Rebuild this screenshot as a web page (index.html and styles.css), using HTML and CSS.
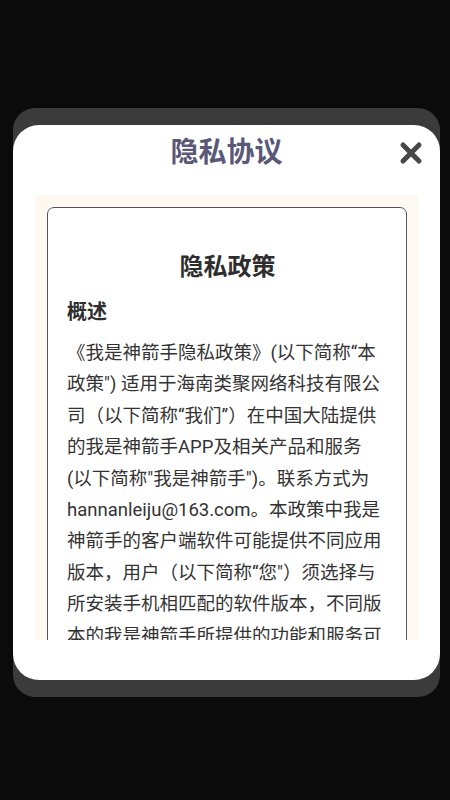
FILE: index.html
```html
<!DOCTYPE html>
<html lang="zh-CN">
<head>
<meta charset="utf-8">
<link rel="stylesheet" href="styles.css">
</head>
<body>
<div class="screen">
  <div class="panel">
    <div class="card">
      <div class="header">
        <div class="title">隐私协议</div>
        <svg class="close" viewBox="0 0 24 24" width="24" height="24"><path d="M4 4 L20 20 M20 4 L4 20" stroke="#474747" stroke-width="5" stroke-linecap="round" fill="none"/></svg>
      </div>
      <div class="scroll">
        <div class="doc">
          <div class="doc-title">隐私政策</div>
          <div class="section">概述</div>
          <p class="para">《我是神箭手隐私政策》(以下简称“本<br>政策") 适用于海南类聚网络科技有限公<br>司（以下简称“我们”）在中国大陆提供<br>的我是神箭手APP及相关产品和服务<br>(以下简称"我是神箭手")。联系方式为<br>hannanleiju@163.com。本政策中我是<br>神箭手的客户端软件可能提供不同应用<br>版本，用户（以下简称“您"）须选择与<br>所安装手机相匹配的软件版本，不同版<br>本的我是神箭手所提供的功能和服务可<br>能存在差异。</p>
        </div>
      </div>
    </div>
  </div>
</div>
</body>
</html>
```
FILE: styles.css
```css
html, body {
  margin: 0;
  padding: 0;
  background: #0b0b0b;
}
body {
  width: 450px;
  height: 800px;
  overflow: hidden;
  font-family: Roboto, "Noto Sans CJK SC", sans-serif;
}
.screen {
  padding: 108px 10px 0 13px;
}
.panel {
  background: #3b3b3b;
  border-radius: 22px;
  padding: 17px 0;
}
.card {
  background: #ffffff;
  border-radius: 26px;
  height: 555px;
  overflow: hidden;
}
.header {
  position: relative;
  height: 70px;
  display: flex;
  justify-content: center;
}
.title {
  margin-top: 10px;
  font-size: 28px;
  line-height: 36px;
  height: 36px;
  font-weight: 700;
  color: #5a5878;
}
.close {
  position: absolute;
  right: 17px;
  top: 16px;
}
.scroll {
  margin: 0 22px;
  height: 445px;
  background: #fdf8f0;
  padding: 12px 11px 0 12px;
  box-sizing: border-box;
  overflow: hidden;
}
.doc {
  background: #ffffff;
  border: 1.5px solid #555555;
  border-radius: 7px;
  padding: 42px 12px 0 19px;
  color: #333333;
}
.doc-title {
  text-align: center;
  font-size: 24px;
  line-height: 34px;
  font-weight: 700;
  color: #2e2e2e;
  padding-right: 6px;
}
.section {
  margin-top: 13px;
  font-size: 20px;
  line-height: 30px;
  font-weight: 700;
  color: #2e2e2e;
}
.para {
  margin: 11px 0 0 0;
  font-size: 18.5px;
  line-height: 31.4px;
  color: #333333;
  white-space: nowrap;
}
```
